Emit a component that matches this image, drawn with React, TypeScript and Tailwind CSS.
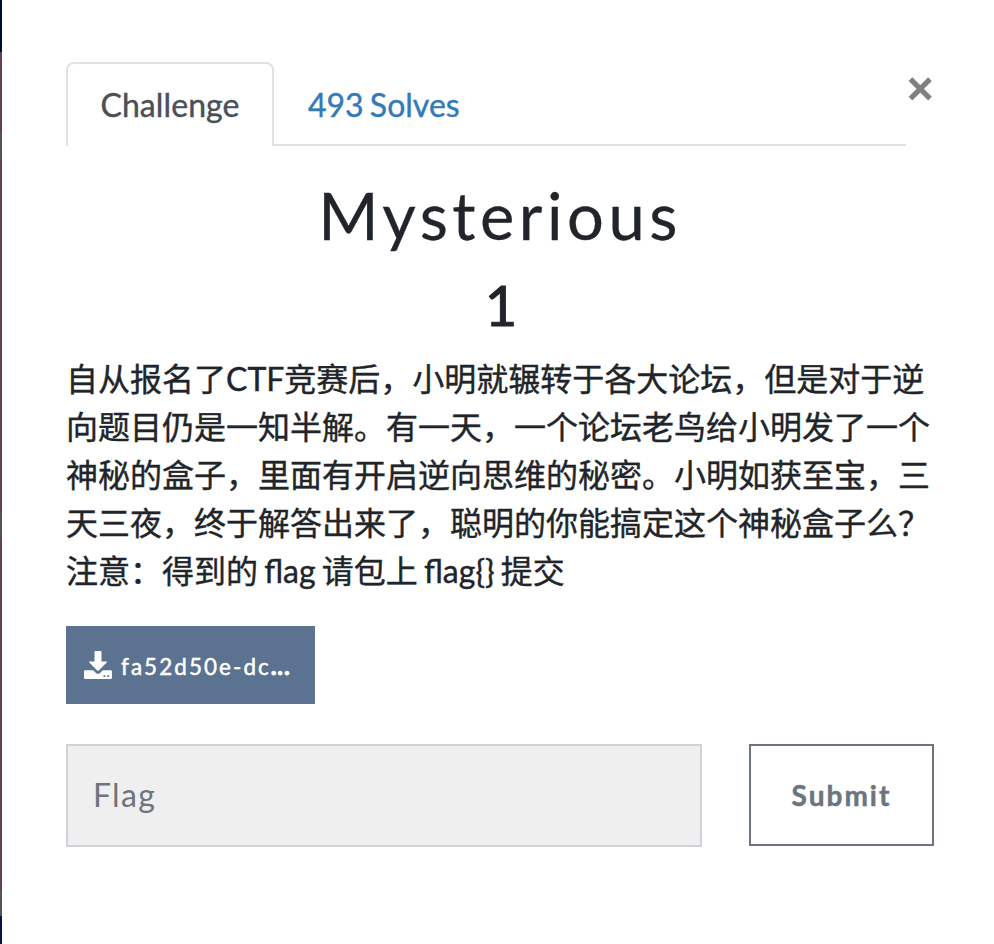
export default function App() {
  const lines = [
    "自从报名了CTF竞赛后，小明就辗转于各大论坛，但是对于逆",
    "向题目仍是一知半解。有一天，一个论坛老鸟给小明发了一个",
    "神秘的盒子，里面有开启逆向思维的秘密。小明如获至宝，三",
    "天三夜，终于解答出来了，聪明的你能搞定这个神秘盒子么？",
    "注意：得到的 flag 请包上 flag{} 提交",
  ];
  return (
    <main className="flex h-[944px] w-[994px] bg-white font-['Lato','Noto_Sans_CJK_SC',sans-serif] text-[#212529]">
      <div className="flex w-[2px] shrink-0 flex-col bg-[#633f50]">
        <div className="h-[52px] bg-[#020a35]" />
        <div className="h-[81px]" />
        <div className="h-[26px] bg-[#555557]" />
        <div className="h-[353px]" />
        <div className="h-[25px] bg-[#555557]" />
        <div className="h-[353px]" />
        <div className="h-[26px] bg-[#555557]" />
        <div className="grow bg-[#0b1246]" />
      </div>
      <section className="ml-[64px] w-[868px] pt-[62px]">
        <header className="flex h-[84px] justify-between">
          <nav className="flex h-[84px] w-[840px] text-[32px] leading-[48px] [-webkit-text-stroke:0.4px_currentColor]">
            <button className="w-[208px] rounded-t-[8px] border-2 border-b-0 border-[#dee2e6] tracking-[0.1px] text-[#495057]">Challenge</button>
            <div className="grow border-b-2 border-[#dee2e6] pt-[19px] pl-[34px] text-[#337ab7] [word-spacing:-2px]">493 Solves</div>
          </nav>
          <button aria-label="Close" className="mr-px mt-[15px] h-[24px] w-[26px]">
            <svg viewBox="0 0 26 24" className="h-6 w-[26px]" stroke="#808080" strokeWidth="5.2"><path d="M3.500 2.200 23 21.700M23 2.200 3.500 21.700" /></svg>
          </button>
        </header>
        <h1 className="mt-[35px] h-[77px] text-center text-[65px] leading-[68px] tracking-[4.5px] [-webkit-text-stroke:0.3px_currentColor]">Mysterious</h1>
        <h2 className="mt-[12px] h-[70px] pl-[2px] text-center text-[56px] leading-[70px] [-webkit-text-stroke:1px_currentColor]">1</h2>
        <div className="mt-[15px] text-[32px] leading-[48px] [-webkit-text-stroke:0.4px_currentColor] [word-spacing:-2px]">
          {lines.map((line) => <p key={line} className="whitespace-nowrap">{line}</p>)}
        </div>
        <button className="mt-[31px] flex h-[78px] w-[249px] items-center bg-[#5b7290] pl-[18px] text-[22.4px] tracking-[2.1px] text-white [-webkit-text-stroke:0.5px_currentColor]">
          <svg viewBox="0 0 28 28" className="mr-[9px] size-[28px]" fill="currentColor" stroke="none"><path d="M11.500 0h5q1 0 1 1v9.500h4.700q1.200 0 .5.900l-7.900 8q-.8.800-1.600 0l-7.900-8q-.7-.9.500-.9H10.500V1q0-1 1-1Z" /><path fillRule="evenodd" d="M1.300 19.200h7.900l2.700 2.700q2.100 1.800 4.200 0l2.700-2.700h7.900q1.300 0 1.300 1.300v6.200q0 1.300-1.300 1.300H1.300Q0 28 0 26.700v-6.200q0-1.300 1.300-1.300Zm18.200 5v1.800h1.800v-1.800Zm3.800 0v1.800h1.800v-1.800Z" /></svg>
          <span className="pt-[3px]">fa52d50e-dc<span className="font-black tracking-[1.400px] [-webkit-text-stroke:1px_currentColor]">...</span></span>
        </button>
        <form className="mt-[40px] flex justify-between">
          <input placeholder="Flag" className="h-[103px] w-[636px] border-2 border-[#ced4da] bg-[#efefef] px-[25px] pb-[3px] text-[32px] tracking-[1.3px] placeholder:text-[#6c757d]" />
          <button type="button" className="h-[102px] w-[185px] border-2 border-[#6c757d] text-[28px] font-bold tracking-[2px] text-[#6c757d] [-webkit-text-stroke:0.5px_currentColor]">Submit</button>
        </form>
      </section>
    </main>
  );
}
